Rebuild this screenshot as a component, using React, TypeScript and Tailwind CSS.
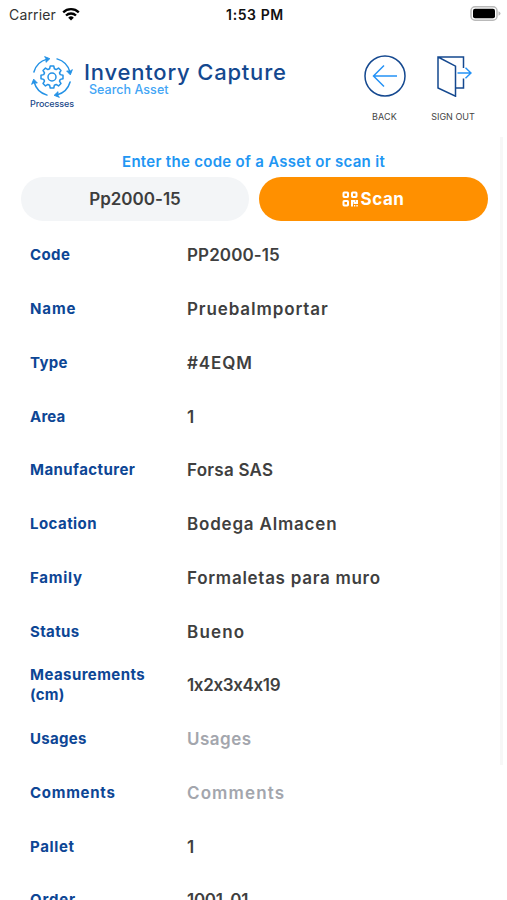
type Field = {
  label: string;
  labelClass: string;
  label2?: string;
  value: string;
  valueClass: string;
  empty?: boolean;
};

const fields: Field[] = [
  { label: "Code", labelClass: "tracking-[0.4px]", value: "PP2000-15", valueClass: "tracking-[0.1px]" },
  { label: "Name", labelClass: "tracking-[0.9px]", value: "PruebaImportar", valueClass: "tracking-[0.87px]" },
  { label: "Type", labelClass: "tracking-[0.35px]", value: "#4EQM", valueClass: "tracking-[0.9px]" },
  { label: "Area", labelClass: "tracking-[0.2px]", value: "1", valueClass: "" },
  { label: "Manufacturer", labelClass: "tracking-[0.43px]", value: "Forsa SAS", valueClass: "tracking-[0.25px]" },
  { label: "Location", labelClass: "tracking-[0.45px]", value: "Bodega Almacen", valueClass: "tracking-[0.8px]" },
  { label: "Family", labelClass: "tracking-[0.75px]", value: "Formaletas para muro", valueClass: "tracking-[0.72px]" },
  { label: "Status", labelClass: "tracking-[0.35px]", value: "Bueno", valueClass: "tracking-[1.2px]" },
  { label: "Measurements", labelClass: "tracking-[0.43px]", label2: "(cm)", value: "1x2x3x4x19", valueClass: "tracking-[-0.35px]" },
  { label: "Usages", labelClass: "tracking-[0.3px]", value: "Usages", valueClass: "tracking-[0.5px]", empty: true },
  { label: "Comments", labelClass: "tracking-[0.73px]", value: "Comments", valueClass: "tracking-[1.12px]", empty: true },
  { label: "Pallet", labelClass: "tracking-[0.65px]", value: "1", valueClass: "" },
  { label: "Order", labelClass: "tracking-[0.85px]", value: "1001-01", valueClass: "tracking-[-0.3px]" },
];

function StatusBar() {
  return (
    <div className="flex h-7 items-center justify-between pl-[9px] pr-[6px] text-black">
      <div className="flex w-[120px] items-center gap-[6px]">
        <span className="text-[14px] tracking-[0.15px] text-[#333]">Carrier</span>
        <svg width="18" height="14" viewBox="0 0 18 14" fill="none" stroke="#000" strokeWidth="2.3">
          <path d="M1.2 5.3a11.2 11.2 0 0 1 15.6 0" />
          <path d="M4 8.5a7.2 7.2 0 0 1 10 0" />
          <path d="M6.2 10.7a4 4 0 0 1 5.6 0L9 13.6z" fill="#000" stroke="none" />
        </svg>
      </div>
      <span className="text-[14px] font-semibold tracking-[0.6px] text-[#111]">1:53 PM</span>
      <div className="flex w-[120px] justify-end pb-[2px]">
        <svg width="31" height="15" viewBox="0 0 31 15">
          <rect x="1" y=".8" width="26" height="13.4" rx="4" fill="#fff" stroke="#b9b9b9" strokeWidth="1.5" />
          <rect x="3" y="2.8" width="22" height="9.4" rx="2" fill="#000" />
          <path d="M28.5 5.2q2 .7 2 2.3t-2 2.3z" fill="#b9b9b9" />
        </svg>
      </div>
    </div>
  );
}

function ProcessIcon() {
  return (
    <svg width="42" height="42" viewBox="0 0 42 42" fill="none" stroke="#2492e6" strokeWidth="1.5" strokeLinejoin="round" strokeLinecap="round">
      {[0, 90, 180, 270].map((a) => (
        <g key={a} transform={`rotate(${a} 21 21)`}>
          <path d="M2.9 16A18.6 18.600 0 0 1 16 3.100" />
          <path d="M14 .8 18.800 2.700 15 6.300 15.200 3.300z" fill="#2492e6" strokeWidth="1" />
        </g>
      ))}
      <circle cx="21" cy="21" r="4" />
      <path
        d="M19 9.500h4l.7 3.100 2 .9 2.700-1.700 2.800 2.800-1.700 2.700.9 2 3.100.7v4l-3.100.7-.9 2 1.700 2.700-2.800 2.800-2.700-1.700-2 .9-.7 3.100h-4l-.7-3.100-2-.9-2.700 1.700-2.800-2.800 1.700-2.700-.9-2-3.100-.7v-4l3.100-.7.9-2-1.700-2.700 2.800-2.800 2.700 1.700 2-.9z"
        transform="translate(21 21) scale(.88) translate(-21 -22)"
        strokeWidth="1.700"
      />
    </svg>
  );
}

function Header() {
  return (
    <header className="flex h-[108px] pt-[22px]">
      <div className="flex w-[68px] flex-col items-center pl-[36px]">
        <div className="flex w-[42px] shrink-0 flex-col items-center pt-[6px]">
          <ProcessIcon />
          <span className="text-[9px] font-medium leading-[11px] tracking-[-0.1px] text-[#22498a]">Processes</span>
        </div>
      </div>
      <div className="flex flex-1 flex-col pl-4 pt-[11px]">
        <h1 className="text-[22px] font-medium leading-[22px] tracking-[0.8px] text-[#14488f]">Inventory Capture</h1>
        <span className="pl-[5px] text-[12.5px] font-medium leading-[14px] tracking-[0.03px] text-[#42a5f5]">Search Asset</span>
      </div>
      <div className="flex w-[68px] flex-col items-center pr-px pt-[5px]">
        <svg width="42" height="42" viewBox="0 0 42 42" fill="none" strokeWidth="1.5">
          <circle cx="21" cy="21" r="20" stroke="#14488f" />
          <path d="M33 21H10M20 10.500 9.500 21 20 31.500" stroke="#2492f6" />
        </svg>
        <span className="mt-[14px] text-[9px] leading-3 tracking-[0.2px] text-[#444]">BACK</span>
      </div>
      <div className="mr-5 flex w-[68px] flex-col items-center pt-[5px]">
        <svg width="38" height="42" viewBox="0 0 38 42" fill="none" strokeWidth="1.5">
          <path d="M29.500 13V2H4V33L21.500 41.200V11.200L4 2M21.500 33H29.500V23.500" stroke="#14488f" />
          <path d="M23.500 18H36.500M31.500 12.800 37 18 31.500 23.200" stroke="#2492f6" />
        </svg>
        <span className="mt-[14px] whitespace-nowrap text-[9px] leading-3 text-[#444]">SIGN OUT</span>
      </div>
    </header>
  );
}

function ScanIcon() {
  return (
    <svg width="16" height="16" viewBox="0 0 16 16" fill="none" stroke="#fff" strokeWidth="2">
      <rect x="1.500" y="1.500" width="4.500" height="4.500" rx=".7" />
      <rect x="10" y="1.500" width="4.500" height="4.500" rx=".7" />
      <rect x="1.500" y="10" width="4.500" height="4.500" rx=".7" />
      <path d="M10 15.500V10h2.500v2H15V9" />
      <path d="M12 14.700h1.300M14.300 14.700h1.500" strokeWidth="1.500" />
    </svg>
  );
}

export default function App() {
  return (
    <div className="relative h-[900px] w-[507px] overflow-hidden bg-white font-['Inter','Noto_Sans',sans-serif] [font-feature-settings:'calt'_0]">
      <StatusBar />
      <Header />
      <main>
        <div className="flex h-[41px] items-end justify-center pb-[5px]">
          <p className="text-[15px] font-semibold leading-5 tracking-[0.3px] text-[#2196f3]">Enter the code of a Asset or scan it</p>
        </div>
        <div className="flex gap-[10px] pl-[21px] pr-[19px]">
          <div className="flex h-11 w-[228px] items-center justify-center rounded-full bg-[#f3f5f7] pt-px text-[17px] font-semibold text-[#3d3d3d]">
            Pp2000-15
          </div>
          <button className="flex h-11 flex-1 items-center justify-center gap-[3px] rounded-full bg-[#ff9000] pr-px text-[17px] font-bold tracking-[0.5px] text-white">
            <ScanIcon />
            <span className="pt-px">Scan</span>
          </button>
        </div>
        <dl className="pt-[7.5px]">
          {fields.map((f) => (
            <div key={f.label} className="flex h-[53.75px] items-center pl-[30px]">
              <dt className={`w-[157px] text-[15px] font-bold leading-5 text-[#0d4695] ${f.labelClass}`}>
                {f.label}
                {f.label2 && <span className="block tracking-[0.2px]">{f.label2}</span>}
              </dt>
              <dd className={`whitespace-nowrap text-[17px] font-semibold leading-6 ${f.empty ? "text-[#a3a6ad]" : "text-[#3f3f3f]"} ${f.valueClass}`}>
                {f.value}
              </dd>
            </div>
          ))}
        </dl>
      </main>
      <div className="absolute left-[500px] top-[137px] h-[628px] w-[3px] bg-[#f7f7f7]" />
    </div>
  );
}
